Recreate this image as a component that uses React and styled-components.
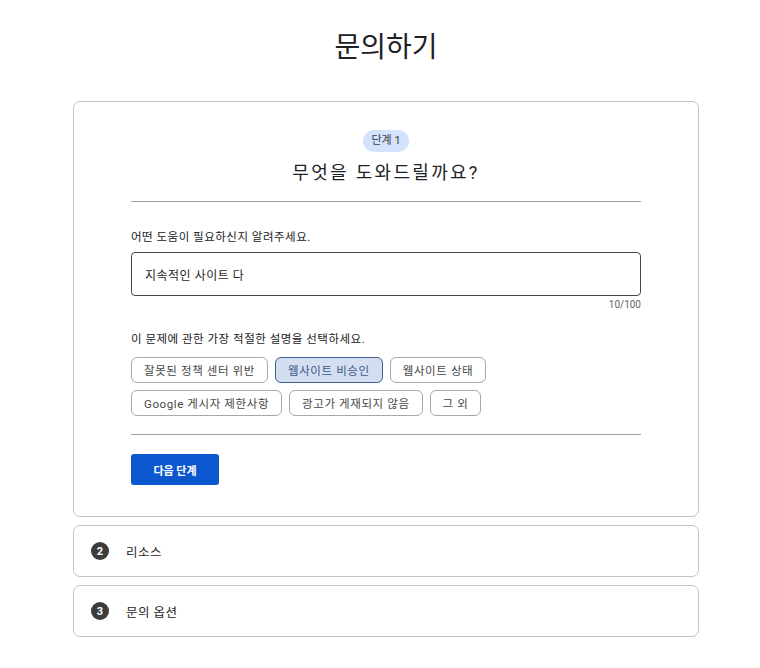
import styled, { createGlobalStyle } from 'styled-components';

const GlobalStyle = createGlobalStyle`
  body {
    margin: 0;
    background: #ffffff;
    font-family: Roboto, "Noto Sans CJK KR", sans-serif;
    color: #1f1f1f;
  }
`;

const CATEGORIES = [
  { label: '잘못된 정책 센터 위반' },
  { label: '웹사이트 비승인', selected: true },
  { label: '웹사이트 상태' },
  { label: 'Google 게시자 제한사항' },
  { label: '광고가 게재되지 않음' },
  { label: '그 외' },
];

export default function App() {
  return (
    <>
      <GlobalStyle />
      <Page>
        <PageTitle>문의하기</PageTitle>

        <Card>
          <StepHeader>
            <Badge>단계 1</Badge>
            <Heading>무엇을 도와드릴까요?</Heading>
          </StepHeader>

          <Divider />

          <Label>어떤 도움이 필요하신지 알려주세요.</Label>
          <InputBox>지속적인 사이트 다</InputBox>
          <Counter>10/100</Counter>

          <Label $spaced>이 문제에 관한 가장 적절한 설명을 선택하세요.</Label>
          <ChipList>
            {CATEGORIES.map((c) => (
              <Chip key={c.label} $selected={c.selected}>
                {c.label}
              </Chip>
            ))}
          </ChipList>

          <Divider $bottom />

          <PrimaryButton>다음 단계</PrimaryButton>
        </Card>

        <CollapsedStep>
          <StepNumber>2</StepNumber>
          <StepName>리소스</StepName>
        </CollapsedStep>
        <CollapsedStep>
          <StepNumber>3</StepNumber>
          <StepName>문의 옵션</StepName>
        </CollapsedStep>
      </Page>
    </>
  );
}

const Page = styled.div`
  width: 626px;
  padding: 28px 0 30px 73px;
  display: flex;
  flex-direction: column;
  gap: 8px;
`;

const PageTitle = styled.h1`
  margin: 0 0 25px;
  font-size: 28px;
  line-height: 40px;
  font-weight: 400;
  text-align: center;
  color: #202124;
`;

const Card = styled.div`
  border: 1px solid #c4c4c4;
  border-radius: 7px;
  padding: 28px 57px 31px;
  display: flex;
  flex-direction: column;
  align-items: flex-start;
`;

const StepHeader = styled.div`
  align-self: stretch;
  display: flex;
  flex-direction: column;
  align-items: center;
`;

const Badge = styled.span`
  height: 22px;
  padding: 0 8px;
  border-radius: 11px;
  background: #d3e3fd;
  color: #3c4043;
  font-size: 11px;
  line-height: 22px;
`;

const Heading = styled.h2`
  margin: 9px 0 0;
  font-size: 18px;
  line-height: 24px;
  font-weight: 400;
  letter-spacing: 2.3px;
  color: #202124;
`;

const Divider = styled.hr`
  align-self: stretch;
  margin: ${(p) => (p.$bottom ? '18px 0 19px' : '16px 0 0')};
  border: 0;
  border-top: 1px solid #9e9e9e;
`;

const Label = styled.p`
  margin: ${(p) => (p.$spaced ? '20px 0 10px' : '27px 0 7px')};
  font-size: 11.5px;
  line-height: 16px;
  letter-spacing: 0.5px;
  color: #202124;
`;

const InputBox = styled.div`
  align-self: stretch;
  height: 44px;
  box-sizing: border-box;
  border: 1px solid #444746;
  border-radius: 4px;
  padding: 0 13px;
  display: flex;
  align-items: center;
  font-size: 12px;
  letter-spacing: 0.5px;
  color: #1f1f1f;
`;

const Counter = styled.div`
  align-self: stretch;
  margin-top: 3px;
  text-align: right;
  font-size: 10px;
  line-height: 12px;
  color: #5f6368;
`;

const ChipList = styled.div`
  display: flex;
  flex-wrap: wrap;
  gap: 7px;
  max-width: 380px;
`;

const Chip = styled.button`
  height: 26px;
  padding: 0 12px;
  border-radius: 6px;
  border: 1px solid ${(p) => (p.$selected ? '#3e5f90' : '#a8a8a8')};
  background: ${(p) => (p.$selected ? '#d3dff1' : '#ffffff')};
  color: ${(p) => (p.$selected ? '#3b5888' : '#444746')};
  font-family: Roboto, "Noto Sans CJK KR", sans-serif;
  font-size: 11.5px;
  letter-spacing: 0.6px;
  cursor: pointer;
`;

const PrimaryButton = styled.button`
  height: 31px;
  width: 88px;
  border: 0;
  border-radius: 3px;
  background: #0b57d0;
  color: #ffffff;
  font-family: Roboto, "Noto Sans CJK KR", sans-serif;
  font-size: 11px;
  font-weight: 700;
  cursor: pointer;
`;

const CollapsedStep = styled.div`
  height: 52px;
  box-sizing: border-box;
  border: 1px solid #c4c4c4;
  border-radius: 7px;
  padding: 0 17px;
  display: flex;
  align-items: center;
  gap: 17px;
`;

const StepNumber = styled.span`
  width: 18px;
  height: 18px;
  border-radius: 50%;
  background: #3c3c3c;
  color: #ffffff;
  font-size: 11px;
  font-weight: 700;
  display: flex;
  align-items: center;
  justify-content: center;
`;

const StepName = styled.span`
  font-size: 12.5px;
  font-weight: 400;
  letter-spacing: 0.5px;
  color: #1f1f1f;
`;
